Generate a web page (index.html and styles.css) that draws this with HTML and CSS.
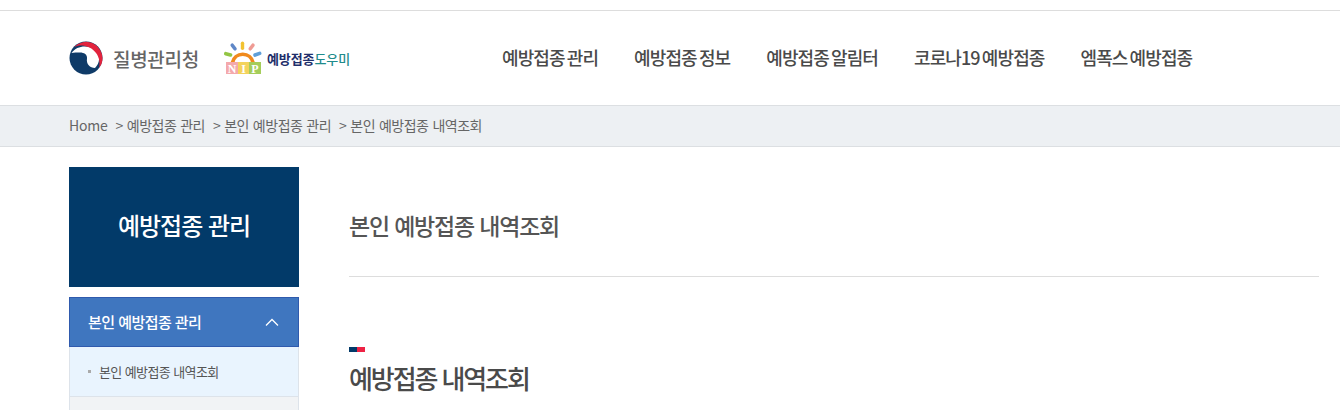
FILE: index.html
```html
<!DOCTYPE html>
<html lang="ko">
<head>
<meta charset="utf-8">
<title>본인 예방접종 내역조회</title>
<link rel="stylesheet" href="styles.css">
</head>
<body>
<header class="header">
  <div class="logos">
    <a class="logo-kdca">
      <svg class="taegeuk" width="34" height="34" viewBox="0 0 34 34">
        <circle cx="17" cy="17" r="16.500" fill="#0f3b68"/>
        <path d="M2.500 12C8 4 20 3.500 27 9.500C31.500 15 31 22 26 27C21 27 17 23 18 17.500C18.500 13.500 15 11.500 11 11.500C8 11.500 5 11.500 2.500 12Z" fill="#fff"/>
        <path d="M5 6A16.500 16.500 0 0 1 33.400 19C33 22 32 24.500 30 27C32 18 28 10.500 20.500 6.500C14.500 3.500 9 4 5 6Z" fill="#e2233d"/>
      </svg>
      <span class="kdca-name">질병관리청</span>
    </a>
    <a class="logo-nip">
      <svg class="sun" width="40" height="34" viewBox="0 0 40 34">
        <path d="M6.500 21.500A12.500 12.500 0 0 1 31 21.500L27 21.500A8.500 8.500 0 0 0 10.500 21.500Z" fill="#f08a1d"/>
        <rect x="16.800" y="0.500" width="3.400" height="8.500" rx="1.700" fill="#f2c230"/>
        <rect x="7.800" y="2" width="3.600" height="8" rx="1.800" fill="#5f87c7" transform="rotate(-38 9.600 6)"/>
        <rect x="25.800" y="2" width="3.600" height="8" rx="1.800" fill="#ef9b94" transform="rotate(38 27.600 6)"/>
        <rect x="0" y="11.500" width="8.500" height="3.600" rx="1.800" fill="#93c544" transform="rotate(15 4.200 13)"/>
        <rect x="29" y="11.500" width="8.500" height="3.600" rx="1.800" fill="#5f9fd8" transform="rotate(-20 33 13)"/>
        <rect x="2" y="21" width="12" height="12" fill="#f4a9ac"/>
        <rect x="14" y="21" width="11" height="12" fill="#f3d35c"/>
        <rect x="25" y="21" width="12" height="12" fill="#a5cd5a"/>
        <text x="8" y="31.500" class="nip-letter">N</text>
        <text x="19.500" y="31.500" class="nip-letter">I</text>
        <text x="31" y="31.500" class="nip-letter">P</text>
      </svg>
      <span class="nip-name">예방접종<em class="nip-accent">도우미</em></span>
    </a>
  </div>
  <nav class="gnb">
    <a>예방접종 관리</a>
    <a>예방접종 정보</a>
    <a>예방접종 알림터</a>
    <a>코로나19 예방접종</a>
    <a>엠폭스 예방접종</a>
  </nav>
</header>
<div class="crumbs">
  <span class="crumb-home">Home</span>
  <span class="crumb">&gt; 예방접종 관리</span>
  <span class="crumb">&gt; 본인 예방접종 관리</span>
  <span class="crumb">&gt; 본인 예방접종 내역조회</span>
</div>
<div class="layout">
  <aside class="side">
    <h2 class="side-title">예방접종 관리</h2>
    <div class="side-head">
      <span>본인 예방접종 관리</span>
      <svg width="14" height="8" viewBox="0 0 14 8"><path d="M1 7.500L7 1.500L13 7.500" fill="none" stroke="#fff" stroke-width="1.300"/></svg>
    </div>
    <div class="side-item side-item-on"><i class="dot"></i>본인 예방접종 내역조회</div>
    <div class="side-item"></div>
  </aside>
  <main class="main">
    <h1 class="page-title">본인 예방접종 내역조회</h1>
    <div class="section">
      <div class="mark"><i class="mark-navy"></i><i class="mark-red"></i></div>
      <h2 class="section-title">예방접종 내역조회</h2>
    </div>
  </main>
</div>
</body>
</html>
```
FILE: styles.css
```css
* { box-sizing: border-box; }
html, body { margin: 0; height: 410px; overflow: hidden; background: #fff; }
body { padding-top: 10px; font-family: "Noto Sans CJK KR", "Noto Sans", sans-serif; color: #555; }
a { color: inherit; text-decoration: none; }
h1, h2 { margin: 0; }

.header { height: 95px; border-top: 1px solid #ddd; padding-left: 69px; display: flex; align-items: center; }
.logos { display: flex; align-items: center; width: 433px; }
.logo-kdca { display: flex; align-items: center; width: 155px; gap: 10px; }
.taegeuk { flex: none; }
.kdca-name { font-size: 19px; font-weight: 500; color: #666; letter-spacing: -0.3px; }
.logo-nip { display: flex; align-items: center; gap: 3px; }
.sun { flex: none; }
.nip-letter { font-family: "Liberation Serif", serif; font-size: 12px; font-weight: 700; fill: #fff; text-anchor: middle; }
.nip-name { font-size: 13px; font-weight: 700; color: #1f2f6b; letter-spacing: -0.1px; }
.nip-accent { font-style: normal; font-weight: 500; color: #1f8c8c; }
.gnb { display: flex; gap: 36px; margin-top: -2px; }
.gnb a { font-size: 18px; font-weight: 500; color: #4a4a4a; letter-spacing: -0.9px; word-spacing: -2px; }

.crumbs { height: 42px; background: #edf0f3; border-top: 1px solid #dcdfe2; border-bottom: 1px solid #dcdfe2; padding: 0 0 2px 69px; display: flex; align-items: center; font-size: 14px; color: #666; gap: 8px; }
.crumb-home { letter-spacing: -0.2px; }
.crumb { letter-spacing: -0.5px; word-spacing: 0.5px; }

.layout { display: flex; padding: 20px 21px 0 69px; gap: 50px; }
.side { width: 230px; flex: none; }
.side-title { height: 120px; margin-bottom: 10px; padding-bottom: 6px; background: #023a69; color: #fff; font-size: 24px; font-weight: 500; letter-spacing: -1px; display: flex; align-items: center; justify-content: center; }
.side-head { height: 50px; padding: 0 19px 1px 18px; background: #3f76bf; border: 1px solid #2f5aad; color: #fff; font-size: 15px; font-weight: 500; letter-spacing: -0.55px; display: flex; align-items: center; justify-content: space-between; }
.side-item { height: 50px; padding: 0 0 1px 18px; background: #f1f3f5; border: 1px solid #dde3ea; border-top: 0; display: flex; align-items: center; font-size: 13px; color: #555; letter-spacing: -0.6px; }
.side-item-on { background: #e9f4fe; }
.dot { width: 3px; height: 3px; background: #aaa; margin-right: 8px; }

.main { flex: 1; }
.page-title { height: 110px; border-bottom: 1px solid #ddd; font-size: 23px; font-weight: 500; color: #555; letter-spacing: -1.2px; padding-top: 39px; line-height: 38px; }
.section { padding-top: 70px; }
.mark { display: flex; height: 5px; }
.mark-navy { width: 8px; background: #023a69; }
.mark-red { width: 8px; background: #ee2244; }
.section-title { font-size: 26px; font-weight: 500; color: #4a4a4a; letter-spacing: -2.1px; line-height: 40px; margin-top: 6px; }
```
